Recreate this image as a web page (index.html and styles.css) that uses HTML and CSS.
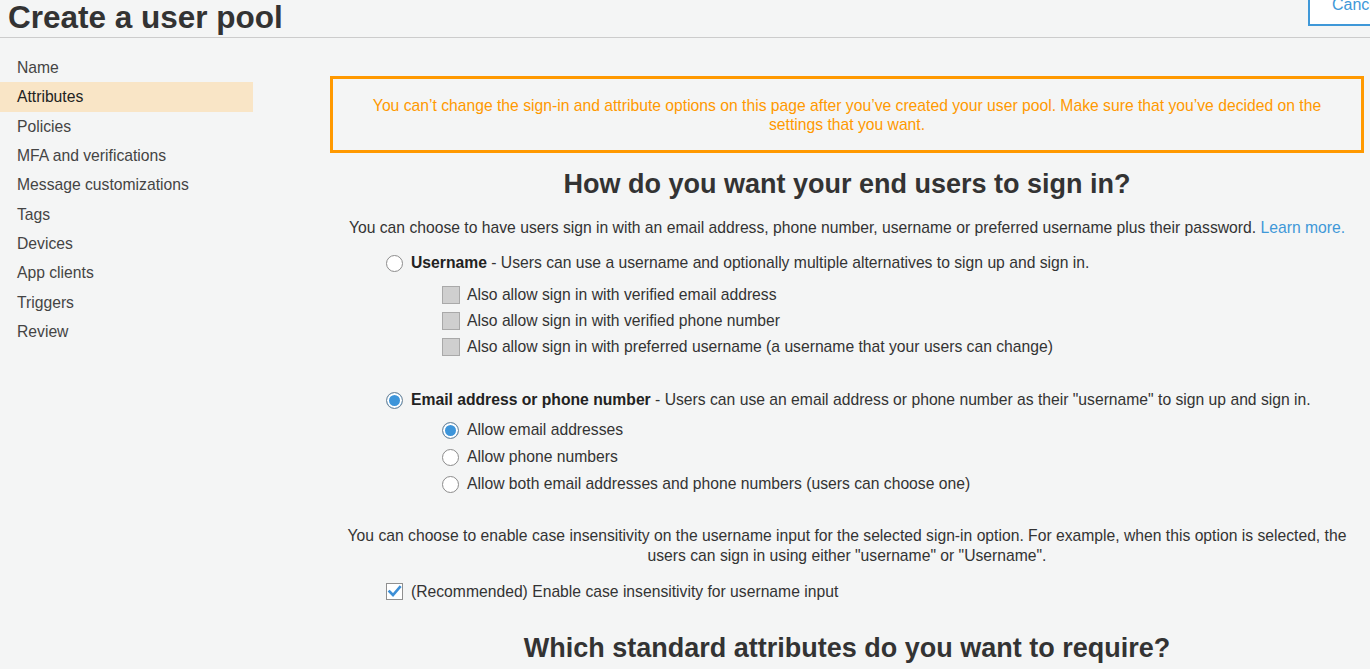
FILE: index.html
```html
<!DOCTYPE html>
<html>
<head>
<meta charset="utf-8">
<link rel="stylesheet" href="styles.css">
</head>
<body>
<header class="top">
  <h1 class="title">Create a user pool</h1>
  <button class="cancel">Cancel</button>
</header>
<div class="layout">
  <nav class="sidebar">
    <div class="nav-item">Name</div>
    <div class="nav-item active">Attributes</div>
    <div class="nav-item">Policies</div>
    <div class="nav-item">MFA and verifications</div>
    <div class="nav-item">Message customizations</div>
    <div class="nav-item">Tags</div>
    <div class="nav-item">Devices</div>
    <div class="nav-item">App clients</div>
    <div class="nav-item">Triggers</div>
    <div class="nav-item">Review</div>
  </nav>
  <main class="main">
    <div class="warning">You can’t change the sign-in and attribute options on this page after you’ve created your user pool. Make sure that you’ve decided on the settings that you want.</div>
    <h2 class="heading">How do you want your end users to sign in?</h2>
    <p class="para">You can choose to have users sign in with an email address, phone number, username or preferred username plus their password. <a class="link">Learn more.</a></p>
    <div class="options">
      <div class="row"><span class="radio"></span><span><b>Username</b> - Users can use a username and optionally multiple alternatives to sign up and sign in.</span></div>
      <div class="sub sub-checks">
        <div class="row"><span class="check disabled"></span><span>Also allow sign in with verified email address</span></div>
        <div class="row"><span class="check disabled"></span><span>Also allow sign in with verified phone number</span></div>
        <div class="row"><span class="check disabled"></span><span>Also allow sign in with preferred username (a username that your users can change)</span></div>
      </div>
      <div class="row email-row"><span class="radio on"></span><span><b>Email address or phone number</b> - Users can use an email address or phone number as their "username" to sign up and sign in.</span></div>
      <div class="sub sub-radios">
        <div class="row tall"><span class="radio on"></span><span>Allow email addresses</span></div>
        <div class="row tall"><span class="radio"></span><span>Allow phone numbers</span></div>
        <div class="row tall"><span class="radio"></span><span>Allow both email addresses and phone numbers (users can choose one)</span></div>
      </div>
    </div>
    <p class="para para2">You can choose to enable case insensitivity on the username input for the selected sign-in option. For example, when this option is selected, the users can sign in using either "username" or "Username".</p>
    <div class="options">
      <div class="row"><span class="check checked"><svg width="15" height="15" viewBox="0 0 15 15"><path d="M2.5 7.5 L6 11 L12.8 3.2" fill="none" stroke="#3d8fd6" stroke-width="2.6" stroke-linecap="square"/></svg></span><span>(Recommended) Enable case insensitivity for username input</span></div>
    </div>
    <h2 class="heading heading2">Which standard attributes do you want to require?</h2>
  </main>
</div>
</body>
</html>
```

FILE: styles.css
```css
html, body {
  margin: 0;
  padding: 0;
  background: #f4f5f5;
  font-family: "Liberation Sans", Arial, sans-serif;
  color: #333;
  overflow: hidden;
}

.top {
  display: flex;
  justify-content: space-between;
  align-items: flex-start;
  height: 37px;
  border-bottom: 1px solid #cccccc;
  position: relative;
}

.title {
  margin: 0;
  padding-left: 8px;
  font-size: 31.5px;
  font-weight: bold;
  line-height: 34px;
  color: #333;
}

.cancel {
  position: absolute;
  left: 1308px;
  top: -10px;
  width: 90px;
  height: 36px;
  background: #fff;
  border: 2px solid #3f98d8;
  color: #3f98d8;
  font-family: "Liberation Sans", Arial, sans-serif;
  font-size: 16px;
  text-align: left;
  padding: 0 0 11px 22px;
  line-height: 16px;
  display: flex;
  align-items: flex-end;
}

.layout {
  display: flex;
  align-items: flex-start;
}

.sidebar {
  width: 253px;
  flex: none;
  padding-top: 15px;
}

.nav-item {
  height: 29.33px;
  line-height: 29.33px;
  padding-left: 17px;
  font-size: 15.7px;
  color: #444;
}

.nav-item.active {
  background: #f9e5c6;
  color: #222;
}

.main {
  margin-left: 77px;
  width: 1034px;
  padding-top: 38px;
}

.warning {
  border: 3px solid #ff9900;
  color: #ff9900;
  font-size: 15.7px;
  line-height: 19px;
  text-align: center;
  padding: 17px 30px 16px;
}

.heading {
  margin: 16px 0 0;
  text-align: center;
  font-size: 27px;
  line-height: 30px;
  font-weight: bold;
  color: #333;
}

.para {
  margin: 19px 0 0;
  text-align: center;
  font-size: 15.7px;
  line-height: 20px;
  color: #333;
}

.link {
  color: #3f98d8;
}

.options {
  padding-left: 56px;
  margin-top: 12px;
}

.row {
  display: flex;
  align-items: center;
  gap: 8px;
  height: 26px;
  font-size: 15.7px;
  color: #333;
}

.row.tall {
  height: 27px;
}

.row b {
  color: #222;
}

.sub {
  padding-left: 56px;
}

.sub-checks {
  margin-top: 6px;
}

.sub-checks .row {
  gap: 7px;
}

.email-row {
  margin-top: 27px;
}

.sub-radios {
  margin-top: 3.5px;
}

.radio {
  flex: none;
  width: 17px;
  height: 17px;
  box-sizing: border-box;
  border-radius: 50%;
  border: 1px solid #8c8c8c;
  background: #fff;
}

.radio.on {
  background: #3d95da;
  box-shadow: inset 0 0 0 2px #fff;
  border-color: #7d8b97;
}

.check {
  flex: none;
  width: 18px;
  height: 18px;
  box-sizing: border-box;
  border: 1px solid #aaaaaa;
  background: #fff;
  display: flex;
  align-items: center;
  justify-content: center;
}

.check.disabled {
  background: #cfcfcf;
  border-color: #a9a9a9;
}

.check.checked {
  width: 17px;
  height: 17px;
  border-color: #8f8f8f;
}

.para2 {
  margin-top: 28px;
  padding: 0;
}

.heading2 {
  margin-top: 28px;
}

.para2 + .options {
  margin-top: 13px;
}
```
